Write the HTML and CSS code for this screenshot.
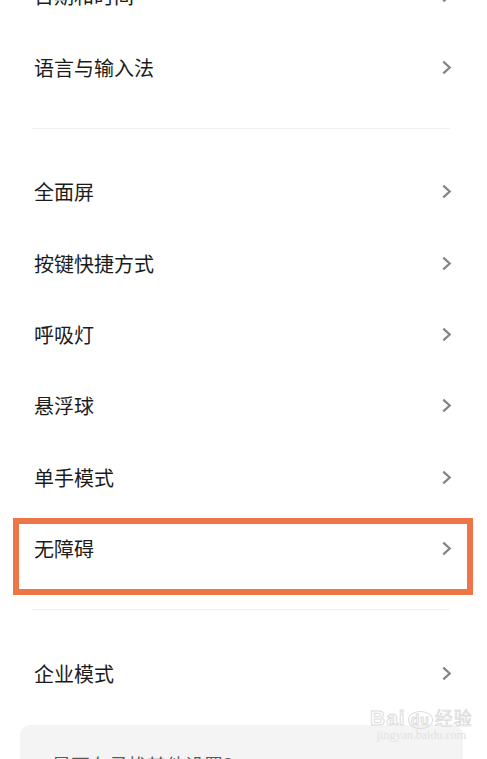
FILE: index.html
```html
<!DOCTYPE html>
<html lang="zh-CN">
<head>
    <meta charset="UTF-8">
    <meta name="viewport" content="width=device-width, initial-scale=1.0">
    <title>更多设置</title>
    <link rel="stylesheet" href="styles.css">
</head>
<body>

<div class="settings">
    <div class="row"><span>日期和时间</span><svg class="arrow" viewBox="0 0 12 14"><path d="M3 1.5 L9 7 L3 12.5"/></svg></div>
    <div class="row"><span>语言与输入法</span><svg class="arrow" viewBox="0 0 12 14"><path d="M3 1.5 L9 7 L3 12.5"/></svg></div>

    <div class="divider"></div>

    <div class="row"><span>全面屏</span><svg class="arrow" viewBox="0 0 12 14"><path d="M3 1.5 L9 7 L3 12.5"/></svg></div>
    <div class="row"><span>按键快捷方式</span><svg class="arrow" viewBox="0 0 12 14"><path d="M3 1.5 L9 7 L3 12.5"/></svg></div>
    <div class="row"><span>呼吸灯</span><svg class="arrow" viewBox="0 0 12 14"><path d="M3 1.5 L9 7 L3 12.5"/></svg></div>
    <div class="row"><span>悬浮球</span><svg class="arrow" viewBox="0 0 12 14"><path d="M3 1.5 L9 7 L3 12.5"/></svg></div>
    <div class="row"><span>单手模式</span><svg class="arrow" viewBox="0 0 12 14"><path d="M3 1.5 L9 7 L3 12.5"/></svg></div>
    <div class="row highlight"><span>无障碍</span><svg class="arrow" viewBox="0 0 12 14"><path d="M3 1.5 L9 7 L3 12.5"/></svg></div>

    <div class="divider"></div>

    <div class="row"><span>企业模式</span><svg class="arrow" viewBox="0 0 12 14"><path d="M3 1.5 L9 7 L3 12.5"/></svg></div>
</div>

<!-- 底部推荐卡片 -->
<div class="card">
    <div class="card-title">是否在寻找其他设置？</div>
</div>

<div class="watermark">
    <div class="wm-logo">Bai<span class="wm-du">du</span><span class="wm-cn">经验</span></div>
    <div class="wm-url">jingyan.baidu.com</div>
</div>

</body>
</html>
```

FILE: styles.css
```css
* {
    margin: 0;
    padding: 0;
    box-sizing: border-box;
}

body {
    font-family: "Noto Sans CJK SC", "Noto Sans", sans-serif;
    background-color: #ffffff;
    width: 487px;
    height: 759px;
    overflow: hidden;
    position: relative;
}

.settings {
    margin-top: -41px;
    padding: 0 34px 0 34px;
}

.row {
    height: 71.4px;
    display: flex;
    justify-content: space-between;
    align-items: center;
    font-size: 20px;
    color: #1c1c1c;
}

.row:first-child,
.row:nth-child(2) {
    height: 72px;
}

.arrow {
    width: 13px;
    height: 15px;
    fill: none;
    stroke: #858585;
    stroke-width: 2.1;
}

.divider {
    height: 1px;
    background: #f0f0f0;
    margin: 25px 3px 27px -2px;
}

/* 标注框 */
.highlight {
    position: relative;
}

.highlight::after {
    content: "";
    position: absolute;
    top: 5px;
    bottom: -11px;
    left: -21px;
    right: -20px;
    border: 6px solid #ee7547;
}

.card {
    margin: 16px 24px 0 20px;
    background: #f4f4f4;
    border-radius: 10px;
    height: 80px;
    padding: 26px 32px;
}

.card-title {
    font-size: 19px;
    color: #5a5a5a;
}

.watermark {
    position: absolute;
    left: 370px;
    top: 704px;
    text-align: center;
}

.wm-logo {
    font-family: "Liberation Sans", sans-serif;
    font-size: 21px;
    font-weight: bold;
    letter-spacing: 1px;
    color: #ffffff;
    -webkit-text-stroke: 1px #dcdcdc;
}

.wm-du {
    font-size: 14px;
    border: 1px solid #dcdcdc;
    border-radius: 50%;
    padding: 0 2px;
    margin: 0 2px;
}

.wm-cn {
    font-family: "Noto Sans CJK SC", sans-serif;
    font-weight: normal;
    font-size: 18px;
    color: #f2f2f2;
    -webkit-text-stroke: 0.6px #d6d6d6;
}

.wm-url {
    font-family: "Liberation Serif", serif;
    font-size: 12px;
    color: #e2e2e2;
    margin-top: -2px;
}
```
